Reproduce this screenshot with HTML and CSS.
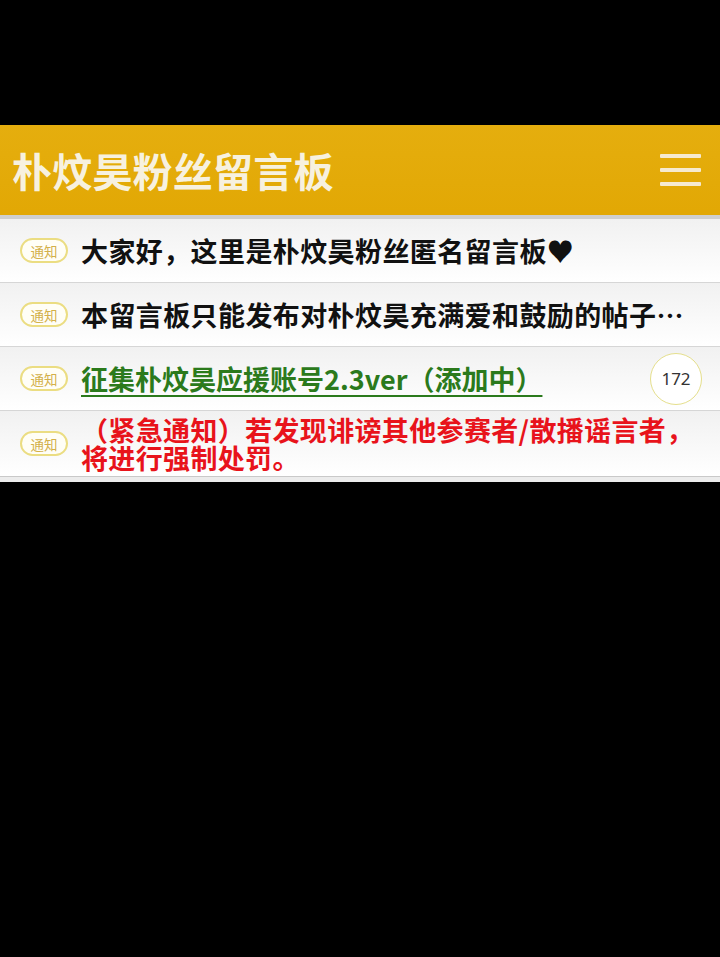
FILE: index.html
```html
<!DOCTYPE html>
<html lang="zh-CN">
<head>
<meta charset="utf-8">
<title>朴炆昊粉丝留言板</title>
<link rel="stylesheet" href="styles.css">
</head>
<body>
<div class="page">
  <header class="topbar">
    <h1 class="title">朴炆昊粉丝留言板</h1>
    <div class="menu" aria-label="菜单">
      <span class="bar"></span><span class="bar"></span><span class="bar"></span>
    </div>
  </header>
  <ul class="list">
    <li class="row">
      <span class="badge">通知</span>
      <span class="text">大家好，这里是朴炆昊粉丝匿名留言板♥</span>
    </li>
    <li class="row">
      <span class="badge">通知</span>
      <span class="text">本留言板只能发布对朴炆昊充满爱和鼓励的帖子…</span>
    </li>
    <li class="row">
      <span class="badge">通知</span>
      <a class="text link" href="#">征集朴炆昊应援账号2.3ver（添加中）</a>
      <span class="count">172</span>
    </li>
    <li class="row tall">
      <span class="badge">通知</span>
      <span class="text alert">（紧急通知）若发现诽谤其他参赛者/散播谣言者，将进行强制处罚。</span>
    </li>
  </ul>
</div>
</body>
</html>
```
FILE: styles.css
```css
html, body {
  margin: 0;
  padding: 0;
  background: #000;
}
body {
  font-family: "Noto Sans CJK SC", "Noto Sans", sans-serif;
  width: 720px;
  height: 957px;
  overflow: hidden;
}
.page {
  padding-top: 125px;
}
.topbar {
  height: 94px;
  background: linear-gradient(#e5ae0e, #e2a805 96%);
  display: flex;
  align-items: center;
  justify-content: space-between;
  padding: 0 19px 0 12px;
  box-sizing: border-box;
  border-bottom: 4px solid #cfcfcf;
}
.title {
  margin: 0;
  font-size: 40px;
  font-weight: 700;
  color: #f7f1df;
  line-height: 1;
  letter-spacing: 0.2px;
}
.menu {
  width: 41px;
  display: flex;
  flex-direction: column;
  gap: 10px;
}
.bar {
  display: block;
  height: 4px;
  background: #f6ead0;
  border-radius: 1px;
}
.list {
  list-style: none;
  margin: 0;
  padding: 0;
  background: #fafafa;
  border-bottom: 5px solid #ececec;
}
.row {
  display: flex;
  align-items: center;
  height: 64px;
  padding: 0 18px 0 20px;
  border-bottom: 1px solid #d6d6d6;
  background: linear-gradient(#f1f1f1, #ffffff);
  box-sizing: border-box;
}
.row.tall {
  height: 66px;
  border-bottom: 1px solid #c9c9c9;
}
.badge {
  flex: none;
  width: 48px;
  height: 25px;
  box-sizing: border-box;
  border: 2px solid #ebdd82;
  border-radius: 13px;
  font-size: 13.5px;
  color: #d3b04a;
  display: flex;
  align-items: center;
  justify-content: center;
  margin-right: 13px;
  background: #fffef6;
}
.text {
  flex: 1;
  font-size: 27px;
  font-weight: 700;
  color: #111;
  line-height: 28px;
  white-space: nowrap;
  letter-spacing: 0.4px;
}
.link {
  flex: none;
  color: #2b7a1c;
  letter-spacing: 0;
  text-decoration: underline;
  text-decoration-thickness: 2px;
  text-underline-offset: 5px;
}
.alert {
  color: #e8131b;
  white-space: normal;
  letter-spacing: 0.35px;
}
.count {
  flex: none;
  margin-left: auto;
  width: 52px;
  height: 52px;
  box-sizing: border-box;
  border: 1.5px solid #e5df8c;
  border-radius: 50%;
  display: flex;
  align-items: center;
  justify-content: center;
  font-family: "Noto Sans", sans-serif;
  font-size: 17px;
  color: #333;
  background: #fff;
}
```
